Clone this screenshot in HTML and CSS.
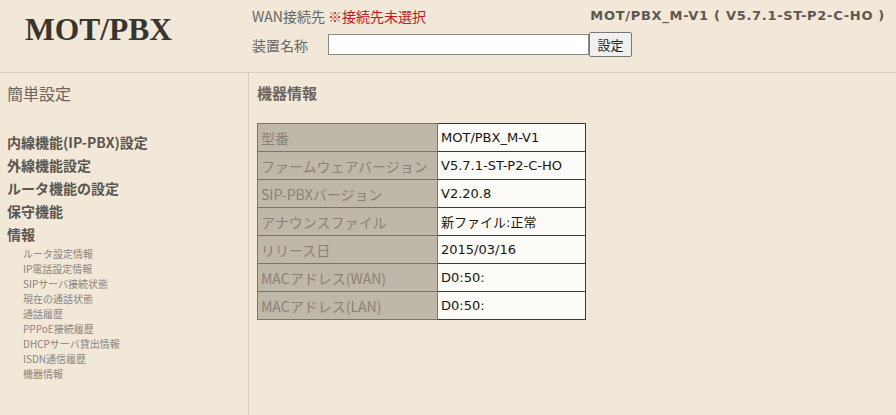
FILE: index.html
```html
<!DOCTYPE html>
<html lang="ja">
<head>
  <meta charset="UTF-8" />
  <title>MOT/PBX</title>
  <link rel="stylesheet" href="styles.css">
</head>
<body>
  <header>
    <div class="logo">MOT/PBX</div>
    <div class="head-main">
      <div class="head-top">
        <div class="wan">WAN接続先 <span class="warn">※接続先未選択</span></div>
        <div class="model">MOT/PBX_M-V1 ( V5.7.1-ST-P2-C-HO )</div>
      </div>
      <div class="name-row">
        <span class="name-label">装置名称</span>
        <input type="text" class="name-input">
        <button class="set-btn">設定</button>
      </div>
    </div>
  </header>

  <div class="layout">
    <nav class="side">
      <div class="easy">簡単設定</div>
      <ul class="menu">
        <li>内線機能(IP-PBX)設定</li>
        <li>外線機能設定</li>
        <li>ルータ機能の設定</li>
        <li>保守機能</li>
        <li>情報</li>
      </ul>
      <ul class="submenu">
        <li>ルータ設定情報</li>
        <li>IP電話設定情報</li>
        <li>SIPサーバ接続状態</li>
        <li>現在の通話状態</li>
        <li>通話履歴</li>
        <li>PPPoE接続履歴</li>
        <li>DHCPサーバ貸出情報</li>
        <li>ISDN通信履歴</li>
        <li>機器情報</li>
      </ul>
    </nav>

    <main>
      <h2>機器情報</h2>
      <table class="info">
        <tr><th>型番</th><td>MOT/PBX_M-V1</td></tr>
        <tr><th>ファームウェアバージョン</th><td>V5.7.1-ST-P2-C-HO</td></tr>
        <tr><th>SIP-PBXバージョン</th><td>V2.20.8</td></tr>
        <tr><th>アナウンスファイル</th><td>新ファイル:正常</td></tr>
        <tr><th>リリース日</th><td>2015/03/16</td></tr>
        <tr><th>MACアドレス(WAN)</th><td>D0:50:<span class="mask">&nbsp;</span></td></tr>
        <tr><th>MACアドレス(LAN)</th><td>D0:50:<span class="mask">&nbsp;</span></td></tr>
      </table>
    </main>
  </div>
</body>
</html>
```

FILE: styles.css
```css
*, *::before, *::after { box-sizing: border-box; }
body {
  margin: 0;
  font-family: "DejaVu Sans", "Noto Sans CJK JP", sans-serif;
  background: #f1e8d8;
  color: #555;
  height: 415px;
  overflow: hidden;
}
header {
  display: flex;
  height: 73px;
  border-bottom: 1px solid #d6cdbd;
}
.logo {
  width: 248px;
  flex-shrink: 0;
  padding: 12px 0 0 25px;
  font-family: "Liberation Serif", serif;
  font-weight: bold;
  font-size: 31.5px;
  color: #383430;
}
.head-main {
  flex: 1;
  padding: 6px 11px 0 4px;
  font-family: "Noto Sans CJK JP", sans-serif;
  font-size: 14px;
  color: #666;
}
.head-top {
  display: flex;
  justify-content: space-between;
  height: 22px;
}
.wan { line-height: 20px; }
.warn { color: #c8141e; }
.model {
  padding-top: 2px;
  white-space: nowrap;
  font-family: "DejaVu Sans", sans-serif;
  font-weight: bold;
  font-size: 13px;
  letter-spacing: 0.7px;
  color: #5c5852;
}
.name-row {
  display: flex;
  align-items: center;
  margin-top: 4px;
}
.name-label { width: 76px; }
.name-input {
  width: 261px;
  height: 21px;
  border: 1px solid #8a8a8a;
  background: #fff;
  margin: 0;
}
.set-btn {
  width: 43px;
  height: 25px;
  margin: 0;
  padding: 0;
  font-family: "Noto Sans CJK JP", sans-serif;
  font-size: 13px;
  color: #222;
  background: #f0f0f0;
  border: 1px solid #777;
  border-radius: 2px;
}

.layout {
  display: flex;
  height: 342px;
}
.side {
  width: 249px;
  flex-shrink: 0;
  border-right: 1px solid #d6cdbd;
  padding: 8px 0 0 7px;
  font-family: "Noto Sans CJK JP", sans-serif;
}
.easy {
  font-size: 16px;
  color: #6a6560;
  line-height: 24px;
}
.menu, .submenu { list-style: none; margin: 0; padding: 0; }
.menu {
  margin-top: 26px;
  font-size: 14px;
  font-weight: bold;
  color: #5a5650;
}
.menu li { line-height: 23px; }
.submenu {
  margin-left: 16px;
  font-size: 10px;
  color: #8a847c;
}
.submenu li { line-height: 15px; }

main {
  padding: 8px 0 0 8px;
}
h2 {
  margin: 0;
  font-family: "Noto Sans CJK JP", sans-serif;
  font-size: 15px;
  line-height: 24px;
  color: #6a6560;
}
.info {
  margin-top: 18px;
  border-collapse: collapse;
  border: 1px solid #3a3a3a;
}
.info th, .info td {
  height: 28px;
  padding: 0 3px;
  font-size: 14px;
  font-weight: normal;
  text-align: left;
  white-space: nowrap;
}
.info th {
  width: 180px;
  background: #bfb7a8;
  color: #8a8274;
  border: 1px solid #7a7468;
  font-family: "Noto Sans CJK JP", sans-serif;
}
.info td {
  width: 148px;
  background: #fdfbf7;
  color: #151515;
  border: 1px solid #3a3a3a;
  font-size: 13px;
  font-family: "DejaVu Sans", "Noto Sans CJK JP", sans-serif;
}
.mask { display: inline-block; width: 70px; }
```
